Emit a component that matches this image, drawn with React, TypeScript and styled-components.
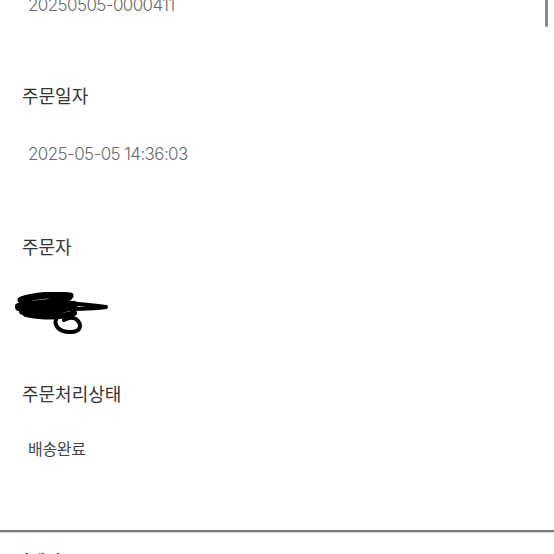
import React from "react";
import styled, { createGlobalStyle } from "styled-components";

const GlobalStyle = createGlobalStyle`
  html, body {
    margin: 0;
    padding: 0;
    background: #ffffff;
    overflow: hidden;
  }
  body {
    font-family: "Noto Sans CJK KR", "Noto Sans", sans-serif;
  }
`;

const Page = styled.div`
  position: relative;
  width: 554px;
  height: 554px;
  overflow: hidden;
  background: #ffffff;
`;

const Content = styled.div`
  display: flex;
  flex-direction: column;
  margin-top: -8px;
`;

const Section = styled.div<{ $gap?: number }>`
  display: flex;
  flex-direction: column;
  padding-bottom: ${(p) => p.$gap ?? 64}px;
`;

const Label = styled.p`
  margin: 0 0 33px 22px;
  font-size: 18px;
  line-height: 26px;
  font-weight: 400;
  color: #353535;
`;

const Value = styled.p`
  margin: 0 0 0 28px;
  font-family: "Inter", "Noto Sans CJK KR", sans-serif;
  font-size: 17px;
  line-height: 26px;
  font-weight: 300;
  letter-spacing: -0.6px;
  color: #6a6a6a;
`;

const StatusValue = styled.p`
  margin: -4px 0 0 28px;
  font-family: "Noto Sans CJK KR", sans-serif;
  font-size: 16px;
  line-height: 26px;
  font-weight: 400;
  letter-spacing: -0.3px;
  color: #444444;
`;

const Scribble = styled.svg`
  display: block;
  margin-left: 14px;
  width: 96px;
  height: 44px;
`;

const Divider = styled.hr`
  margin: 0;
  border: none;
  border-top: 2px solid #7a7a7a;
  box-shadow: 0 1px 0 #d8d8d8;
`;

const BottomTitle = styled.h3`
  margin: 16px 0 0 14px;
  font-size: 17px;
  font-weight: 700;
  color: #111111;
`;

const ScrollThumb = styled.div`
  position: absolute;
  top: 0;
  right: 6px;
  width: 3px;
  height: 27px;
  border-radius: 0 0 2px 2px;
  background: #8a8a8a;
`;

const App = () => {
  return (
    <Page>
      <GlobalStyle />
      <Content>
        <Section $gap={64}>
          <Value>20250505-0000411</Value>
        </Section>
        <Section $gap={66}>
          <Label>주문일자</Label>
          <Value>2025-05-05 14:36:03</Value>
        </Section>
        <Section $gap={44}>
          <Label>주문자</Label>
          <Scribble viewBox="0 0 96 44">
            <g fill="none" stroke="#000" strokeLinecap="round" strokeLinejoin="round">
              <path d="M7 8 C22 3 42 2 56 4 C54 9 32 11 8 13" strokeWidth="7" />
              <path d="M5 15 C24 11 46 12 60 13 C46 19 24 22 9 19" strokeWidth="8" />
              <path d="M12 22 C28 25 46 26 60 21" strokeWidth="6" />
              <path d="M44 11 C58 11 76 13 92 15 C78 17 62 17 46 17" strokeWidth="4" />
              <path d="M44 24 C38 32 44 40 56 40 C68 40 68 32 62 27 C57 24 52 27 50 28" strokeWidth="4" />
            </g>
          </Scribble>
        </Section>
        <Section $gap={69}>
          <Label>주문처리상태</Label>
          <StatusValue>배송완료</StatusValue>
        </Section>
        <Divider />
        <BottomTitle>결제정보</BottomTitle>
      </Content>
      <ScrollThumb />
    </Page>
  );
};

export default App;
